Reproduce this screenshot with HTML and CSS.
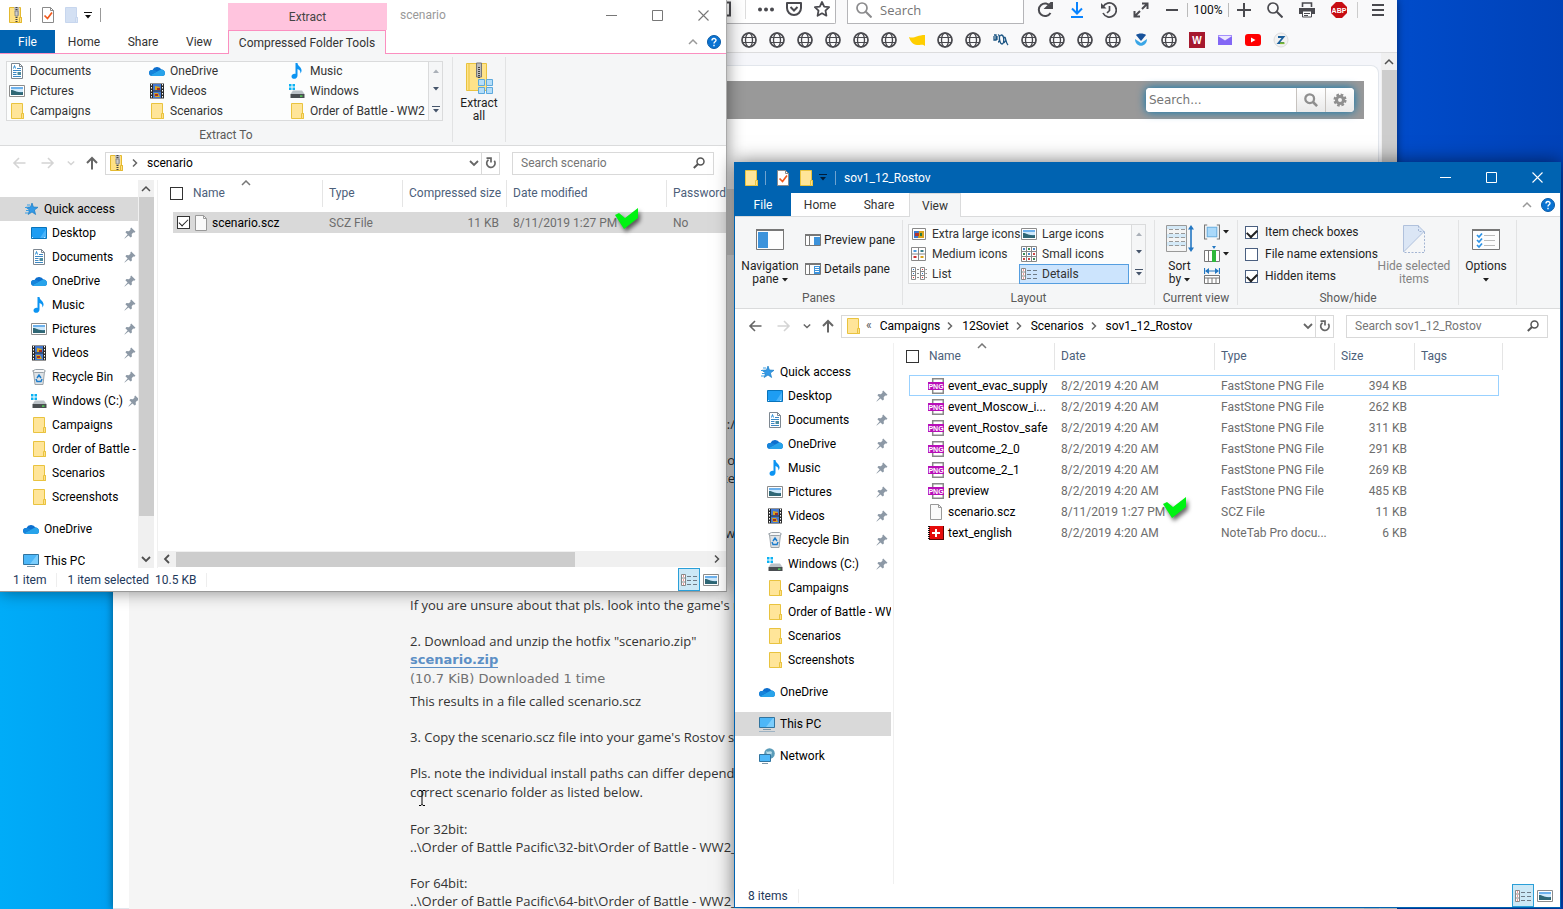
FILE: index.html
```html
<!DOCTYPE html>
<html lang="en">
<head>
    <meta charset="UTF-8">
    <meta name="viewport" content="width=device-width, initial-scale=1.0">
    <title>Desktop</title>
    <link rel="stylesheet" href="styles.css">
</head>
<body>
    <!-- Icon sprite -->
    <svg class="sprite" aria-hidden="true">
        <symbol id="folder" viewBox="0 0 16 16"><path d="M2.500 .5h11v10h1v5h-12z" fill="#ffe599" stroke="#e9c33f"/><path d="M12.500 15.500v-5h2v5z" fill="#ffe08a" stroke="#e9c33f"/></symbol>
        <symbol id="folder-pale" viewBox="0 0 16 16"><path d="M2.500 .5h11v10h1v5h-12z" fill="#d3e0f3" stroke="#c7d6ee"/><path d="M12.500 15.500v-5h2v5z" fill="#dbe6f5" stroke="#c7d6ee"/></symbol>
        <symbol id="zip" viewBox="0 0 16 16"><path d="M1.500 .5h11v10h1v5h-12z" fill="#ffe184" stroke="#e3b930"/><path d="M11.500 15.500v-5h2v5z" fill="#ffe08a" stroke="#e3b930"/><path d="M6 0h5v8l-2 2-2-2z" fill="#b9b9b9"/><path d="M8.500 0v16" stroke="#444" stroke-width="2" stroke-dasharray="1 1"/><path d="M7 4h3v5H7z" fill="#ccc" stroke="#666" stroke-width=".6"/></symbol>
        <symbol id="check-doc" viewBox="0 0 16 16"><path d="M2.500 .5h8l3 3v12h-11z" fill="#fff" stroke="#8a8a8a"/><path d="M10.500 .5v3h3" fill="none" stroke="#8a8a8a"/><path d="M4.500 8.500l3 3 4.500-6" fill="none" stroke="#f0581c" stroke-width="1.700"/></symbol>
        <symbol id="doc" viewBox="0 0 16 16"><path d="M2.500 .5h8l3 3v12h-11z" fill="#fff" stroke="#7d8791"/><path d="M10.500 .5v3h3" fill="none" stroke="#7d8791"/><path d="M4 7.500h8M4 9.500h3.500M4 11.500h3.500M4 13.500h8M8 5.500h4" stroke="#3c88c4"/><path d="M4.500 5.500l1-3 1 3" stroke="#2a8dd4" fill="none"/><path d="M8.500 9h3.500v3H8.500z" fill="#4b8c9f"/></symbol>
        <symbol id="picture" viewBox="0 0 16 16"><path d="M.5 2.500h15v11H.5z" fill="#fff" stroke="#8c8c8c"/><path d="M2 4h12v8H2z" fill="#6db1ec"/><path d="M2 6h12v3H2z" fill="#cfe9fb"/><path d="M2 7c4 0 5 3 12 2v3H2z" fill="#2f6775"/></symbol>
        <symbol id="cloud" viewBox="0 0 16 16"><path d="M3.500 7A5 5 0 0 1 12.500 6.500 4 4 0 0 1 16 10a3 3 0 0 1-3 3H3.500A3.200 3.200 0 0 1 0 10 3.200 3.200 0 0 1 3.500 7z" fill="#0d6fce"/><path d="M1.500 12L12 6.500A4 4 0 0 1 16 10a3 3 0 0 1-3 3H3.500a3 3 0 0 1-2-1z" fill="#28a3ea"/><path d="M0 10a3.200 3.200 0 0 1 3.500-3c2 0 3 .5 4.500 1.500L1.500 12A3 3 0 0 1 0 10z" fill="#1684db"/></symbol>
        <symbol id="music" viewBox="0 0 16 16"><path d="M6.500 0h2c0 3.500 4.500 3.800 4 8-.1 1.300-.8 2-1.300 2.500C12 7.500 10 6.500 8.500 6v6.500C8.500 16.500 2.500 17 2.500 13.500c0-2.200 2.500-3 4-2.500z" fill="#0c94f2"/></symbol>
        <symbol id="video" viewBox="0 0 16 16"><path d="M1 .5h14v15H1z" fill="#2b2b2b"/><path d="M2.500 1v14M13.500 1v14" stroke="#fff" stroke-dasharray="1.500 1.500"/><path d="M4 1h8v6.500H4zM4 8.500h8V15H4z" fill="#4479cf"/><path d="M6 3l5 1-2 3H6zM5 10h4l2 4H6z" fill="#d9a520"/><path d="M8 5h3v2H8zM6 11h3v2H6z" fill="#a52e23"/></symbol>
        <symbol id="drive" viewBox="0 0 16 16"><path d="M0 1h2.500v2.500H0zM3.500 1H6v2.500H3.500zM0 4.500h2.500V7H0zM3.500 4.500H6V7H3.500z" fill="#0bb2f3"/><path d="M4 7.500h9l2.500 3.500H1.500z" fill="#bcc2c7"/><path d="M1.500 11h14v4h-14z" fill="#4a4e51"/><path d="M11 12.500h2.500v1.200H11z" fill="#57ef58"/></symbol>
        <symbol id="desktop-icon" viewBox="0 0 16 16"><path d="M.5 2.500h15v11H.5z" fill="#1e9df3" stroke="#0873bb"/><path d="M9 13L15 4v9z" fill="#49b3fa"/><path d="M1 12.500h14" stroke="#cfe9fb" stroke-dasharray="1 11 1 1"/></symbol>
        <symbol id="recycle" viewBox="0 0 16 16"><path d="M2.500 2.500h11l-1.500 13H4z" fill="#dfe3e6" stroke="#9ba3a9"/><path d="M1.500 2l3-1.500h8l2 1.500-2 1.500h-9z" fill="#f6f7f8" stroke="#9ba3a9"/><path d="M6 9l2-3 2 3M11 10l-1 2.500H6L5 10" fill="none" stroke="#1d7dcc" stroke-width="1.500"/></symbol>
        <symbol id="star" viewBox="0 0 16 16"><path d="M9 2l1.400 4 4.600.3-3.600 2.700 1.200 4.500L9 11l-3.800 2.500L6.500 9 3 6.300 7.500 6z" fill="#3399e6" stroke="#1b7cc4" stroke-width=".7"/><path d="M4 4h3M2 6.500h3M3 9.500h3M2 12h3" stroke="#3a9fe5"/></symbol>
        <symbol id="pc" viewBox="0 0 16 16"><path d="M.5 1.500h15v10H.5z" fill="#4db7f8" stroke="#31749f"/><path d="M7 11L14 2h1v9z" fill="#7bcdfc"/><path d="M4 13.500h8" stroke="#7d97a8"/><path d="M0 15.500h16" stroke="#9fb4c4"/></symbol>
        <symbol id="network" viewBox="0 0 16 16"><circle cx="10.500" cy="5.500" r="5.300" fill="#5b9cb9"/><path d="M7 3c2 2 4-1 6 1l-1 4-4-1z" fill="#b6dbe8"/><path d="M.5 6.500h11v7H.5z" fill="#4db7f8" stroke="#31749f"/><path d="M3 15.500h6" stroke="#7d97a8"/></symbol>
        <symbol id="pin" viewBox="0 0 12 12"><path d="M7.200 .5l4.300 4.300-1.300.9-1-.2L7.700 7.200l.2 2.300L6.700 10.600 4.400 8.400 .8 11.600 .4 11.200 3.600 7.600 1.400 5.300l1.100-1.200 2.300.2 1.700-1.500-.2-1z" fill="#8d99a6"/></symbol>
        <symbol id="file" viewBox="0 0 16 16"><path d="M2.500 .5h8l3 3v12h-11z" fill="#fafafa" stroke="#999"/><path d="M10.500 .5v3h3" fill="none" stroke="#999"/></symbol>
        <symbol id="png" viewBox="0 0 16 16"><path d="M4.700 .7h10.600v14.600H4.700z" fill="#fff" stroke="#888" stroke-width="1.500"/><path d="M0 4h16v8H0z" fill="#b80fb8"/><text x="8" y="10.500" text-anchor="middle" font-family="Liberation Sans, sans-serif" font-size="7" font-weight="bold" fill="#fff">PNG</text></symbol>
        <symbol id="notetab" viewBox="0 0 16 16"><path d="M1 1h15v14H1z" fill="#e60b0b"/><path d="M1 1v14" stroke="#111" stroke-width="2" stroke-dasharray="1 1"/><path d="M15.500 1v14M1 14.500h15" stroke="#5b0505"/><path d="M8 4v8M4 8h8" stroke="#fff" stroke-width="2"/></symbol>
        <symbol id="back" viewBox="0 0 14 14"><path d="M13.500 7H2M7 2L2 7l5 5" fill="none" stroke="currentColor" stroke-width="1.600"/></symbol>
        <symbol id="fwd" viewBox="0 0 14 14"><path d="M.5 7H12M7 2l5 5-5 5" fill="none" stroke="currentColor" stroke-width="1.600"/></symbol>
        <symbol id="up" viewBox="0 0 14 14"><path d="M7 13.500V2M2 7l5-5 5 5" fill="none" stroke="currentColor" stroke-width="2"/></symbol>
        <symbol id="chev-down" viewBox="0 0 10 10"><path d="M1 3l4 4 4-4" fill="none" stroke="currentColor" stroke-width="1.800"/></symbol>
        <symbol id="chev-up" viewBox="0 0 10 10"><path d="M1 7l4-4 4 4" fill="none" stroke="currentColor" stroke-width="1.500"/></symbol>
        <symbol id="chev-right" viewBox="0 0 10 10"><path d="M3 1.500L6.500 5 3 8.500" fill="none" stroke="currentColor" stroke-width="1.500"/></symbol>
        <symbol id="chev-left" viewBox="0 0 10 10"><path d="M7 1L3 5l4 4" fill="none" stroke="currentColor" stroke-width="1.800"/></symbol>
        <symbol id="caret" viewBox="0 0 6 4"><path d="M0 0h6L3 3.500z" fill="currentColor"/></symbol>
        <symbol id="caret-up" viewBox="0 0 6 4"><path d="M0 4h6L3 .5z" fill="currentColor"/></symbol>
        <symbol id="caret-bar" viewBox="0 0 8 7"><path d="M0 .5h8" stroke="currentColor"/><path d="M1 3h6L4 6.500z" fill="currentColor"/></symbol>
        <symbol id="refresh" viewBox="0 0 14 14"><path d="M4.500 3.700A4.200 4.200 0 1 0 10.300 4.700" fill="none" stroke="currentColor" stroke-width="1.700"/><path d="M2.500 2.200h4.500V6.500" fill="none" stroke="currentColor" stroke-width="1.700"/></symbol>
        <symbol id="lens" viewBox="0 0 12 12"><circle cx="7.500" cy="4.500" r="3.500" fill="none" stroke="currentColor" stroke-width="1.500"/><path d="M5 7L.8 11" stroke="currentColor" stroke-width="2"/></symbol>
        <symbol id="min" viewBox="0 0 11 11"><path d="M0 5.500h11" stroke="currentColor"/></symbol>
        <symbol id="max" viewBox="0 0 11 11"><path d="M.5 .5h10v10H.5z" fill="none" stroke="currentColor"/></symbol>
        <symbol id="close" viewBox="0 0 11 11"><path d="M.5 .5l10 10M10.500 .5l-10 10" stroke="currentColor" stroke-width="1.100"/></symbol>
        <symbol id="help" viewBox="0 0 14 14"><circle cx="7" cy="7" r="6.500" fill="#0a73d2" stroke="#0a5ba6"/><path d="M5 5.500c0-2.600 4-2.600 4-.2C9 6.800 7 6.800 7 8.500M7 9.800v1.400" fill="none" stroke="#fff" stroke-width="1.400"/></symbol>
        <symbol id="view-list" viewBox="0 0 16 14"><path d="M.5 1.500h4v11h-4zM.5 5h4M.5 9h4" fill="#fff" stroke="#888"/><path d="M2 3h1M2 7h1M2 11h1" stroke="#d33"/><path d="M6 3.500h4M12 3.500h4M6 7.500h4M12 7.500h4M6 11.500h4M12 11.500h4" stroke="#6e7b87"/></symbol>
        <symbol id="list2" viewBox="0 0 16 14"><path d="M.5 .5h4v12h-4zM.5 4.500h4M.5 8.500h4M9.500 .5h4v12h-4zM9.500 4.500h4M9.500 8.500h4" fill="#fff" stroke="#888"/><path d="M2 2.500h1M2 6.500h1M11 6.500h1" stroke="#2c70b8"/><path d="M2 10.500h1M11 2.500h1M11 10.500h1" stroke="#d33"/><path d="M6 2.500h2M6 6.500h2M6 10.500h2M14.500 2.500H16M14.500 6.500H16M14.500 10.500H16" stroke="#888"/></symbol>
        <symbol id="img-xl" viewBox="0 0 16 14"><path d="M1.500 1.500h13v11h-13z" fill="#fff" stroke="#888"/><path d="M3 4h10v7H3z" fill="#3b77cf"/><path d="M8 4h5v7H7z" fill="#d9a31c"/><path d="M4 6h4v3H4z" fill="#b6352d"/><path d="M9 6h2v3H9z" fill="#2d7a42"/></symbol>
        <symbol id="grid4" viewBox="0 0 16 14"><path d="M.5 .5h14v13H.5zM7.500 .5v13M.5 7h14" fill="#fff" stroke="#888"/><path d="M2.500 3h3v2h-3z" fill="#4c9be0"/><path d="M9.500 3h3v2h-3z" fill="#3a7d86"/><path d="M2.500 9h3v2h-3z" fill="#c33"/><path d="M9.500 9h3v2h-3z" fill="#d9a31c"/></symbol>
        <symbol id="grid9" viewBox="0 0 16 16"><path d="M.5 .5h15v15H.5zM5.500 .5v15M10.500 .5v15M.5 5.500h15M.5 10.500h15" fill="#fff" stroke="#888"/><path d="M2 3h2M7 8h2M12 3h2" stroke="#4c88c8" stroke-width="2"/><path d="M7 3h2M2 8h2M12 13h2" stroke="#3b8b55" stroke-width="2"/><path d="M2 13h2M7 13h2M12 8h2" stroke="#c44" stroke-width="2"/></symbol>
        <symbol id="nav-pane" viewBox="0 0 28 21"><path d="M.5 .5h27v20H.5z" fill="#fdfdfd" stroke="#777"/><path d="M0 0h28v2H0z" fill="#777"/><path d="M2 3h10v16H2z" fill="#3d93db"/></symbol>
        <symbol id="preview-pane" viewBox="0 0 16 12"><path d="M.5 .5h15v11H.5z" fill="#fdfdfd" stroke="#777"/><path d="M0 0h16v2H0zM4 2h1v10H4z" fill="#777"/><path d="M9 3h6v8H9z" fill="#3d93db"/></symbol>
        <symbol id="details-pane" viewBox="0 0 16 12"><path d="M.5 .5h15v11H.5z" fill="#fdfdfd" stroke="#777"/><path d="M0 0h16v2H0zM4 2h1v10H4z" fill="#777"/><path d="M9 3h6v8H9z" fill="#3d93db"/><path d="M10 4.500h4M10 6.500h4M10 8.500h4" stroke="#fff"/></symbol>
        <symbol id="sort" viewBox="0 0 28 28"><path d="M.5 .5h20v26H.5z" fill="#f4f4f4" stroke="#999"/><path d="M1 1h19v3H1zM1 9h19v4H1zM1 17h19v4H1z" fill="#d4e9f7"/><path d="M3 4.500h16M3 8.500h16M3 12.500h16M3 16.500h16M3 20.500h16" stroke="#999" stroke-dasharray="4 2"/><path d="M25 2v23" stroke="#2377c2" stroke-width="1.600"/><path d="M22 4.500L25 0l3 4.500zM22 22.500l3 4.500 3-4.500z" fill="#2377c2"/></symbol>
        <symbol id="group" viewBox="0 0 15 14"><path d="M3 .5H.5v13H3M12 .5h2.500v13H12" fill="none" stroke="#777"/><path d="M3 2.500h9v9H3z" fill="#aad9fa" stroke="#6aaede"/></symbol>
        <symbol id="addcol" viewBox="0 0 16 16"><path d="M.5 4.500h15v11H.5zM4.500 4v12" fill="#fff" stroke="#777"/><path d="M8 4h4v12H8z" fill="#2eb83b"/><path d="M8 0h4l-2 3z" fill="#2377c2"/></symbol>
        <symbol id="fitcol" viewBox="0 0 16 16"><path d="M.5 0v6M15.500 0v6M2 3h12" stroke="#2377c2" stroke-width="1.200"/><path d="M1 3l4-3v6zM15 3l-4-3v6z" fill="#2377c2"/><path d="M.5 7.500h15v8H.5zM0 10h16M4 10v6M8 10v6M12 10v6" fill="#fff" stroke="#777"/></symbol>
        <symbol id="hide" viewBox="0 0 22 28"><path d="M.5 27V.5h14.500l6 6L.5 27z" fill="#dbe6f5" stroke="#b0c1dc"/><path d="M15.500 .5v6h6M21.500 7v20.500H1" fill="none" stroke="#a3b5d3" stroke-dasharray="2 1.500"/></symbol>
        <symbol id="options" viewBox="0 0 28 21"><path d="M.5 .5h27v20H.5z" fill="#fdfdfd" stroke="#777"/><path d="M0 0h28v2H0z" fill="#777"/><path d="M12 6.500h11M12 11.500h11M12 16.500h11" stroke="#bbb"/><path d="M5 6l2 2 3-3.500M5 11l2 2 3-3.500M5 16l2 2 3-3.500" fill="none" stroke="#2e93e6" stroke-width="1.700"/></symbol>
        <symbol id="extract" viewBox="0 0 28 32"><path d="M.5 1.500h20v27H.5z" fill="#ffe38a" stroke="#e9c33f"/><path d="M3 2v26" stroke="#e9c33f"/><path d="M10.500 1h5v14h-5z" fill="#bbb" stroke="#777"/><path d="M13 5v11" stroke="#444" stroke-width="2" stroke-dasharray="1 1"/><path d="M12.500 17.500h6v6h-6zM20.500 17.500h6v6h-6zM12.500 25.500h6v6h-6zM20.500 25.500h6v6h-6z" fill="#b5def9" stroke="#5da9dc"/></symbol>
        <symbol id="globe" viewBox="0 0 16 16"><circle cx="8" cy="8" r="7" fill="none" stroke="#4a4a4f" stroke-width="1.700"/><path d="M1 5.500h14M1 10.500h14" stroke="#4a4a4f" stroke-width="1.200"/><ellipse cx="8" cy="8" rx="3.500" ry="7" fill="none" stroke="#4a4a4f" stroke-width="1.300"/></symbol>
        <symbol id="magnify" viewBox="0 0 16 16"><circle cx="6" cy="6" r="5" fill="none" stroke="currentColor" stroke-width="1.700"/><path d="M9.800 9.800L15.500 15.500" stroke="currentColor" stroke-width="2"/></symbol>
        <symbol id="tick" viewBox="0 0 26 28"><path d="M0 8l4-2 6 5L23 1v10L9 22z" fill="#00f312"/></symbol>
    </svg>

    <main class="desktop">
        <!-- Browser in the background -->
        <section class="browser">
            <div class="toolbar">
                <div class="url-end">
                    <svg class="i16 reader" viewBox="0 0 16 16"><path d="M0 1.500h14v13H0M4 5h6M4 8h6M4 11h4" fill="none" stroke="#4a4a4f" stroke-width="2"/></svg>
                    <span class="bar"></span>
                    <svg class="i16" viewBox="0 0 16 16"><path d="M2 6.500a2 2 0 1 1 0 4 2 2 0 0 1 0-4zM8 6.500a2 2 0 1 1 0 4 2 2 0 0 1 0-4zM14 6.500a2 2 0 1 1 0 4 2 2 0 0 1 0-4z" fill="#4a4a4f"/></svg>
                    <svg class="i16" viewBox="0 0 16 16"><path d="M1 2h14v5a7 7 0 0 1-14 0z" fill="none" stroke="#4a4a4f" stroke-width="2" stroke-linejoin="round"/><path d="M4.500 6L8 9.500 11.500 6" fill="none" stroke="#4a4a4f" stroke-width="2"/></svg>
                    <svg class="i16" viewBox="0 0 16 16"><path d="M8 1l2.200 4.600 4.900.6-3.600 3.500.9 5L8 12.300l-4.400 2.400.9-5L.9 6.200l4.900-.6z" fill="none" stroke="#4a4a4f" stroke-width="1.800" stroke-linejoin="round"/></svg>
                </div>
                <label class="web-search">
                    <svg class="i16"><use href="#magnify"/></svg>
                    <input type="text" placeholder="Search">
                </label>
                <button class="tool"><svg class="i16" viewBox="0 0 16 16"><path d="M13.500 4.500A6.300 6.300 0 1 0 13.500 11M15 0v6H9z" fill="none" stroke="#4a4a4f" stroke-width="2"/><path d="M15 1v5h-5z" fill="#4a4a4f"/></svg></button>
                <button class="tool"><svg class="i16" viewBox="0 0 16 16"><path d="M8 0v11M3 6.500l5 5 5-5M2 15h12" fill="none" stroke="#0a84ff" stroke-width="2"/></svg></button>
                <button class="tool"><svg class="i16" viewBox="0 0 16 16"><path d="M2 5a7 7 0 1 1 0 6M8.500 4v4.500L6 11" fill="none" stroke="#4a4a4f" stroke-width="1.700"/><path d="M0 1v5.500h5.500z" fill="#4a4a4f"/></svg></button>
                <button class="tool"><svg class="i16" viewBox="0 0 16 16"><path d="M9 1.500h5.500V7M14 2L9 7M7 14.500H1.500V9M2 14l5-5" fill="none" stroke="#4a4a4f" stroke-width="2"/></svg></button>
                <button class="tool zoom-btn"><svg class="i16" viewBox="0 0 16 16"><path d="M2 8h12" stroke="#4a4a4f" stroke-width="2"/></svg></button>
                <span class="zoom-level">100%</span>
                <button class="tool zoom-btn"><svg class="i16" viewBox="0 0 16 16"><path d="M1 8h14M8 1v14" stroke="#4a4a4f" stroke-width="2"/></svg></button>
                <button class="tool"><svg class="i16 dark"><use href="#magnify"/></svg></button>
                <button class="tool"><svg class="i16" viewBox="0 0 16 16"><path d="M3.500 5V1h9v4" fill="none" stroke="#4a4a4f" stroke-width="1.600"/><path d="M0 6h16v6H0z" fill="#4a4a4f"/><path d="M3.500 9h9v6h-9z" fill="#fff" stroke="#4a4a4f"/><path d="M5 11.500h6M5 13.500h4" stroke="#4a4a4f"/></svg></button>
                <button class="tool"><svg class="i16" viewBox="0 0 16 16"><path d="M5 0h6l5 5v6l-5 5H5l-5-5V5z" fill="#c70d13"/><text x="8" y="10.500" text-anchor="middle" font-family="Liberation Sans, sans-serif" font-size="7" font-weight="bold" fill="#fff">ABP</text></svg></button>
                <button class="tool menu-btn"><svg class="i16" viewBox="0 0 16 16"><path d="M2 3h12M2 8h12M2 13h12" stroke="#4a4a4f" stroke-width="2"/></svg></button>
            </div>
            <div class="bookmarks">
                <svg><use href="#globe"/></svg>
                <svg><use href="#globe"/></svg>
                <svg><use href="#globe"/></svg>
                <svg><use href="#globe"/></svg>
                <svg><use href="#globe"/></svg>
                <svg><use href="#globe"/></svg>
                <svg viewBox="0 0 16 16"><path d="M0 5c5 2 8-2 16-2v11c-2-2-4-1-8-1S1 9 0 5z" fill="#ffce00"/></svg>
                <svg><use href="#globe"/></svg>
                <svg><use href="#globe"/></svg>
                <svg viewBox="0 0 16 16"><path d="M1 4v4h2V3H1M4 8V4M5 3c2-1 2 7 0 7M8 3c-3 1-1 9 1 9s3-9-1-9M11 6c2-3 1 4 4 7M11 11l2-3" fill="none" stroke="#1c5583" stroke-width="1.300"/></svg>
                <svg><use href="#globe"/></svg>
                <svg><use href="#globe"/></svg>
                <svg><use href="#globe"/></svg>
                <svg><use href="#globe"/></svg>
                <svg viewBox="0 0 16 16"><path d="M3 3c2-2 8-2 10 0L8 9z" fill="#17529b"/><path d="M2 7l6 4 6-4c0 9-12 9-12 0z" fill="#3aa6e6"/></svg>
                <svg><use href="#globe"/></svg>
                <svg viewBox="0 0 16 16"><path d="M0 0h16v16H0z" fill="#a6192e"/><text x="8" y="12" text-anchor="middle" font-family="Liberation Sans, sans-serif" font-size="10" font-weight="bold" fill="#fff">W</text></svg>
                <svg viewBox="0 0 16 16"><path d="M1 3h14v10H1z" fill="#8367f5"/><path d="M1 3h14v1L8 8.500 1 4z" fill="#fff" opacity=".85"/><path d="M1 3h14v1H1z" fill="#a58ffc"/></svg>
                <svg viewBox="0 0 16 16"><rect x="0" y="2" width="16" height="12" rx="3" fill="#f00"/><path d="M6 5.500v5L10.500 8z" fill="#fff"/></svg>
                <svg viewBox="0 0 16 16"><circle cx="8" cy="8" r="7" fill="#f1f1f1" stroke="#ddd"/><path d="M5 5h5.500l-5 6H11" fill="none" stroke="#1b5f9b" stroke-width="1.800"/><path d="M7 11.200h4.500" stroke="#7bb92e" stroke-width="1.800"/></svg>
            </div>
            <div class="viewport">
                <div class="page">
                    <div class="page-wrap">
                        <header class="site-header">
                            <form class="site-search">
                                <input type="text" placeholder="Search..." aria-label="Search the forum">
                                <button type="button"><svg viewBox="0 0 16 16"><circle cx="6.500" cy="6.500" r="5" fill="none" stroke="#8f8f8f" stroke-width="2.600"/><path d="M10 10l5 5" stroke="#8f8f8f" stroke-width="3"/></svg></button>
                                <button type="button"><svg viewBox="0 0 16 16"><circle cx="8" cy="8" r="6" fill="none" stroke="#8f8f8f" stroke-width="3" stroke-dasharray="2.900 1.812"/><circle cx="8" cy="8" r="4" fill="none" stroke="#8f8f8f" stroke-width="3.500"/></svg></button>
                            </form>
                        </header>
                        <div class="site-nav"></div>
                        <article class="post">
                            <p class="tail first">C:/</p>
                            <p class="tail">to<br>te</p>
                            <p class="tail gap">ow</p>
                            <p class="wide-gap">If you are unsure about that pls. look into the game's manual</p>
                            <p>2. Download and unzip the hotfix "scenario.zip"</p>
                            <div class="attachment">
                                <a href="#">scenario.zip</a><br>
                                (10.7 KiB) Downloaded 1 time
                            </div>
                            <p class="after-file">This results in a file called scenario.scz</p>
                            <p>3. Copy the scenario.scz file into your game's Rostov scenario folder</p>
                            <p class="note">Pls. note the individual install paths can differ depending on<br>correct scenario folder as listed below.</p>
                            <p>For 32bit:<br>..\Order of Battle Pacific\32-bit\Order of Battle - WW2_</p>
                            <p>For 64bit:<br>..\Order of Battle Pacific\64-bit\Order of Battle - WW2_</p>
                        </article>
                    </div>
                </div>
                <div class="vscroll">
                    <svg class="i10"><use href="#chev-up"/></svg>
                    <span class="thumb"></span>
                </div>
            </div>
        </section>

        <!-- Explorer: zip folder -->
        <section class="explorer zip-window">
            <div class="titlebar">
                <div class="quick">
                    <svg class="i16"><use href="#zip"/></svg>
                    <span class="bar"></span>
                    <svg class="i16"><use href="#check-doc"/></svg>
                    <svg class="i16"><use href="#folder-pale"/></svg>
                    <svg class="caret-bar"><use href="#caret-bar"/></svg>
                    <span class="bar"></span>
                </div>
                <div class="context">Extract</div>
                <span class="title">scenario</span>
                <div class="controls">
                    <button aria-label="Minimize"><svg><use href="#min"/></svg></button>
                    <button aria-label="Maximize"><svg><use href="#max"/></svg></button>
                    <button aria-label="Close"><svg><use href="#close"/></svg></button>
                </div>
            </div>
            <nav class="tabs">
                <button class="tab file-tab">File</button>
                <button class="tab home-tab">Home</button>
                <button class="tab share-tab">Share</button>
                <button class="tab view-tab">View</button>
                <button class="tab context-tab">Compressed Folder Tools</button>
                <svg class="i10 collapse"><use href="#chev-up"/></svg>
                <svg class="help"><use href="#help"/></svg>
            </nav>
            <div class="ribbon">
                <div class="group">
                    <div class="group-body">
                        <div class="gallery extract-gallery">
                            <div class="gallery-items">
                                <button><svg class="i16"><use href="#doc"/></svg>Documents</button>
                                <button><svg class="i16"><use href="#cloud"/></svg>OneDrive</button>
                                <button><svg class="i16"><use href="#music"/></svg>Music</button>
                                <button><svg class="i16"><use href="#picture"/></svg>Pictures</button>
                                <button><svg class="i16"><use href="#video"/></svg>Videos</button>
                                <button><svg class="i16"><use href="#drive"/></svg>Windows</button>
                                <button><svg class="i16"><use href="#folder"/></svg>Campaigns</button>
                                <button><svg class="i16"><use href="#folder"/></svg>Scenarios</button>
                                <button><svg class="i16"><use href="#folder"/></svg>Order of Battle - WW2</button>
                            </div>
                            <div class="gallery-scroll">
                                <svg class="caret faded"><use href="#caret-up"/></svg>
                                <svg class="caret"><use href="#caret"/></svg>
                                <svg class="caret-bar"><use href="#caret-bar"/></svg>
                            </div>
                        </div>
                    </div>
                    <div class="group-label">Extract To</div>
                </div>
                <div class="group extract-group">
                    <button class="big extract-all"><svg class="extract-icon"><use href="#extract"/></svg><span>Extract<br>all</span></button>
                </div>
            </div>
            <div class="address-row">
                <div class="arrows">
                    <svg class="i14 off"><use href="#back"/></svg>
                    <svg class="i14 off"><use href="#fwd"/></svg>
                    <svg class="small-chev off"><use href="#chev-down"/></svg>
                    <svg class="i14"><use href="#up"/></svg>
                </div>
                <div class="address">
                    <svg class="i16"><use href="#zip"/></svg>
                    <svg class="i10 sep"><use href="#chev-right"/></svg>
                    <span>scenario</span>
                    <svg class="i10 drop"><use href="#chev-down"/></svg>
                    <button class="refresh" aria-label="Refresh"><svg class="i14"><use href="#refresh"/></svg></button>
                </div>
                <label class="search"><input type="text" placeholder="Search scenario"><svg><use href="#lens"/></svg></label>
            </div>
            <div class="content">
                <ul class="nav">
                    <li class="root selected"><svg class="i16"><use href="#star"/></svg><span>Quick access</span></li>
                    <li><svg class="i16"><use href="#desktop-icon"/></svg><span>Desktop</span><svg class="pin"><use href="#pin"/></svg></li>
                    <li><svg class="i16"><use href="#doc"/></svg><span>Documents</span><svg class="pin"><use href="#pin"/></svg></li>
                    <li><svg class="i16"><use href="#cloud"/></svg><span>OneDrive</span><svg class="pin"><use href="#pin"/></svg></li>
                    <li><svg class="i16"><use href="#music"/></svg><span>Music</span><svg class="pin"><use href="#pin"/></svg></li>
                    <li><svg class="i16"><use href="#picture"/></svg><span>Pictures</span><svg class="pin"><use href="#pin"/></svg></li>
                    <li><svg class="i16"><use href="#video"/></svg><span>Videos</span><svg class="pin"><use href="#pin"/></svg></li>
                    <li><svg class="i16"><use href="#recycle"/></svg><span>Recycle Bin</span><svg class="pin"><use href="#pin"/></svg></li>
                    <li><svg class="i16"><use href="#drive"/></svg><span>Windows (C:)</span><svg class="pin"><use href="#pin"/></svg></li>
                    <li><svg class="i16"><use href="#folder"/></svg><span>Campaigns</span></li>
                    <li><svg class="i16"><use href="#folder"/></svg><span>Order of Battle -</span></li>
                    <li><svg class="i16"><use href="#folder"/></svg><span>Scenarios</span></li>
                    <li><svg class="i16"><use href="#folder"/></svg><span>Screenshots</span></li>
                    <li class="root spaced"><svg class="i16"><use href="#cloud"/></svg><span>OneDrive</span></li>
                    <li class="root spaced"><svg class="i16"><use href="#pc"/></svg><span>This PC</span></li>
                </ul>
                <div class="vscroll nav-scroll">
                    <svg class="i10"><use href="#chev-up"/></svg>
                    <span class="thumb"></span>
                    <svg class="i10"><use href="#chev-down"/></svg>
                </div>
                <div class="files">
                    <table class="zip-table">
                        <thead>
                            <tr>
                                <th class="c-name"><div class="name-head"><input type="checkbox" aria-label="Select all">Name<svg class="i10 sorted"><use href="#chev-up"/></svg></div></th>
                                <th class="c-type"><div>Type</div></th>
                                <th class="c-size"><div>Compressed size</div></th>
                                <th class="c-date"><div>Date modified</div></th>
                                <th class="c-pass"><div>Password</div></th>
                            </tr>
                        </thead>
                        <tbody>
                            <tr class="selected">
                                <td><div class="file-name"><input type="checkbox" checked aria-label="scenario.scz"><svg class="i16"><use href="#file"/></svg><span>scenario.scz</span></div></td>
                                <td>SCZ File</td>
                                <td class="num">11 KB</td>
                                <td class="marked">8/11/2019 1:27 PM<svg class="tick"><use href="#tick"/></svg></td>
                                <td>No</td>
                            </tr>
                        </tbody>
                    </table>
                    <div class="hscroll">
                        <svg class="i10"><use href="#chev-left"/></svg>
                        <span class="thumb"></span>
                        <svg class="i10"><use href="#chev-right"/></svg>
                    </div>
                </div>
            </div>
            <footer class="status">
                <span>1 item</span>
                <span>1 item selected&nbsp; 10.5 KB</span>
                <div class="view-switch">
                    <button class="on" aria-label="Details"><svg class="i16"><use href="#view-list"/></svg></button>
                    <button aria-label="Thumbnails"><svg class="i16"><use href="#picture"/></svg></button>
                </div>
            </footer>
        </section>

        <!-- Explorer: Rostov folder -->
        <section class="explorer folder-window">
            <div class="titlebar">
                <div class="quick">
                    <svg class="i16"><use href="#folder"/></svg>
                    <span class="bar"></span>
                    <svg class="i16"><use href="#check-doc"/></svg>
                    <svg class="i16"><use href="#folder"/></svg>
                    <svg class="caret-bar"><use href="#caret-bar"/></svg>
                    <span class="bar"></span>
                </div>
                <span class="title">sov1_12_Rostov</span>
                <div class="controls">
                    <button aria-label="Minimize"><svg><use href="#min"/></svg></button>
                    <button aria-label="Maximize"><svg><use href="#max"/></svg></button>
                    <button aria-label="Close"><svg><use href="#close"/></svg></button>
                </div>
            </div>
            <nav class="tabs">
                <button class="tab file-tab">File</button>
                <button class="tab home-tab">Home</button>
                <button class="tab share-tab">Share</button>
                <button class="tab view-tab active">View</button>
                <svg class="i10 collapse"><use href="#chev-up"/></svg>
                <svg class="help"><use href="#help"/></svg>
            </nav>
            <div class="ribbon">
                <div class="group panes">
                    <div class="group-body">
                        <button class="big nav-button"><svg class="wide-icon"><use href="#nav-pane"/></svg><span>Navigation</span><span class="with-caret">pane<svg class="caret"><use href="#caret"/></svg></span></button>
                        <div class="pane-buttons">
                            <button><svg class="pane-icon"><use href="#preview-pane"/></svg>Preview pane</button>
                            <button><svg class="pane-icon"><use href="#details-pane"/></svg>Details pane</button>
                        </div>
                    </div>
                    <div class="group-label">Panes</div>
                </div>
                <div class="group layout">
                    <div class="group-body">
                        <div class="gallery layout-gallery">
                            <div class="gallery-items">
                                <button><svg class="i16"><use href="#img-xl"/></svg>Extra large icons</button>
                                <button><svg class="i16"><use href="#picture"/></svg>Large icons</button>
                                <button><svg class="i16"><use href="#grid4"/></svg>Medium icons</button>
                                <button><svg class="i16"><use href="#grid9"/></svg>Small icons</button>
                                <button><svg class="i16"><use href="#list2"/></svg>List</button>
                                <button class="chosen"><svg class="i16"><use href="#view-list"/></svg>Details</button>
                            </div>
                            <div class="gallery-scroll">
                                <svg class="caret faded"><use href="#caret-up"/></svg>
                                <svg class="caret"><use href="#caret"/></svg>
                                <svg class="caret-bar"><use href="#caret-bar"/></svg>
                            </div>
                        </div>
                    </div>
                    <div class="group-label">Layout</div>
                </div>
                <div class="group current">
                    <div class="group-body">
                        <button class="big sort-button"><svg class="sort-icon"><use href="#sort"/></svg><span>Sort</span><span class="with-caret">by<svg class="caret"><use href="#caret"/></svg></span></button>
                        <div class="column-buttons">
                            <button aria-label="Group by"><svg class="i16"><use href="#group"/></svg><svg class="caret"><use href="#caret"/></svg></button>
                            <button aria-label="Add columns"><svg class="i16"><use href="#addcol"/></svg><svg class="caret"><use href="#caret"/></svg></button>
                            <button aria-label="Size all columns to fit"><svg class="i16"><use href="#fitcol"/></svg></button>
                        </div>
                    </div>
                    <div class="group-label">Current view</div>
                </div>
                <div class="group showhide">
                    <div class="group-body">
                        <div class="checks">
                            <label><input type="checkbox" checked>Item check boxes</label>
                            <label><input type="checkbox">File name extensions</label>
                            <label><input type="checkbox" checked>Hidden items</label>
                        </div>
                        <button class="big hide-button" disabled><svg class="hide-icon"><use href="#hide"/></svg><span>Hide selected<br>items</span></button>
                    </div>
                    <div class="group-label">Show/hide</div>
                </div>
                <div class="group options">
                    <div class="group-body">
                        <button class="big options-button"><svg class="wide-icon"><use href="#options"/></svg><span>Options</span><svg class="caret"><use href="#caret"/></svg></button>
                    </div>
                </div>
            </div>
            <div class="address-row">
                <div class="arrows">
                    <svg class="i14"><use href="#back"/></svg>
                    <svg class="i14 off"><use href="#fwd"/></svg>
                    <svg class="small-chev"><use href="#chev-down"/></svg>
                    <svg class="i14"><use href="#up"/></svg>
                </div>
                <div class="address">
                    <svg class="i16"><use href="#folder"/></svg>
                    <span class="laquo">«</span>
                    <span>Campaigns</span>
                    <svg class="i10 sep"><use href="#chev-right"/></svg>
                    <span>12Soviet</span>
                    <svg class="i10 sep"><use href="#chev-right"/></svg>
                    <span>Scenarios</span>
                    <svg class="i10 sep"><use href="#chev-right"/></svg>
                    <span>sov1_12_Rostov</span>
                    <svg class="i10 drop"><use href="#chev-down"/></svg>
                    <button class="refresh" aria-label="Refresh"><svg class="i14"><use href="#refresh"/></svg></button>
                </div>
                <label class="search"><input type="text" placeholder="Search sov1_12_Rostov"><svg><use href="#lens"/></svg></label>
            </div>
            <div class="content">
                <ul class="nav">
                    <li class="root"><svg class="i16"><use href="#star"/></svg><span>Quick access</span></li>
                    <li><svg class="i16"><use href="#desktop-icon"/></svg><span>Desktop</span><svg class="pin"><use href="#pin"/></svg></li>
                    <li><svg class="i16"><use href="#doc"/></svg><span>Documents</span><svg class="pin"><use href="#pin"/></svg></li>
                    <li><svg class="i16"><use href="#cloud"/></svg><span>OneDrive</span><svg class="pin"><use href="#pin"/></svg></li>
                    <li><svg class="i16"><use href="#music"/></svg><span>Music</span><svg class="pin"><use href="#pin"/></svg></li>
                    <li><svg class="i16"><use href="#picture"/></svg><span>Pictures</span><svg class="pin"><use href="#pin"/></svg></li>
                    <li><svg class="i16"><use href="#video"/></svg><span>Videos</span><svg class="pin"><use href="#pin"/></svg></li>
                    <li><svg class="i16"><use href="#recycle"/></svg><span>Recycle Bin</span><svg class="pin"><use href="#pin"/></svg></li>
                    <li><svg class="i16"><use href="#drive"/></svg><span>Windows (C:)</span><svg class="pin"><use href="#pin"/></svg></li>
                    <li><svg class="i16"><use href="#folder"/></svg><span>Campaigns</span></li>
                    <li><svg class="i16"><use href="#folder"/></svg><span>Order of Battle - WW2</span></li>
                    <li><svg class="i16"><use href="#folder"/></svg><span>Scenarios</span></li>
                    <li><svg class="i16"><use href="#folder"/></svg><span>Screenshots</span></li>
                    <li class="root spaced"><svg class="i16"><use href="#cloud"/></svg><span>OneDrive</span></li>
                    <li class="root spaced selected"><svg class="i16"><use href="#pc"/></svg><span>This PC</span></li>
                    <li class="root spaced"><svg class="i16"><use href="#network"/></svg><span>Network</span></li>
                </ul>
                <div class="files">
                    <table class="folder-table">
                        <thead>
                            <tr>
                                <th class="c-name"><div class="name-head"><input type="checkbox" aria-label="Select all">Name<svg class="i10 sorted"><use href="#chev-up"/></svg></div></th>
                                <th class="c-date"><div>Date</div></th>
                                <th class="c-type"><div>Type</div></th>
                                <th class="c-size"><div>Size</div></th>
                                <th class="c-tags"><div>Tags</div></th>
                            </tr>
                        </thead>
                        <tbody>
                            <tr class="focused">
                                <td><div class="file-name"><svg class="i16"><use href="#png"/></svg><span>event_evac_supply</span></div></td>
                                <td>8/2/2019 4:20 AM</td><td>FastStone PNG File</td><td class="num">394 KB</td><td></td>
                            </tr>
                            <tr>
                                <td><div class="file-name"><svg class="i16"><use href="#png"/></svg><span>event_Moscow_i...</span></div></td>
                                <td>8/2/2019 4:20 AM</td><td>FastStone PNG File</td><td class="num">262 KB</td><td></td>
                            </tr>
                            <tr>
                                <td><div class="file-name"><svg class="i16"><use href="#png"/></svg><span>event_Rostov_safe</span></div></td>
                                <td>8/2/2019 4:20 AM</td><td>FastStone PNG File</td><td class="num">311 KB</td><td></td>
                            </tr>
                            <tr>
                                <td><div class="file-name"><svg class="i16"><use href="#png"/></svg><span>outcome_2_0</span></div></td>
                                <td>8/2/2019 4:20 AM</td><td>FastStone PNG File</td><td class="num">291 KB</td><td></td>
                            </tr>
                            <tr>
                                <td><div class="file-name"><svg class="i16"><use href="#png"/></svg><span>outcome_2_1</span></div></td>
                                <td>8/2/2019 4:20 AM</td><td>FastStone PNG File</td><td class="num">269 KB</td><td></td>
                            </tr>
                            <tr>
                                <td><div class="file-name"><svg class="i16"><use href="#png"/></svg><span>preview</span></div></td>
                                <td>8/2/2019 4:20 AM</td><td>FastStone PNG File</td><td class="num">485 KB</td><td></td>
                            </tr>
                            <tr>
                                <td><div class="file-name"><svg class="i16"><use href="#file"/></svg><span>scenario.scz</span></div></td>
                                <td class="marked">8/11/2019 1:27 PM<svg class="tick"><use href="#tick"/></svg></td><td>SCZ File</td><td class="num">11 KB</td><td></td>
                            </tr>
                            <tr>
                                <td><div class="file-name"><svg class="i16"><use href="#notetab"/></svg><span>text_english</span></div></td>
                                <td>8/2/2019 4:20 AM</td><td>NoteTab Pro docu...</td><td class="num">6 KB</td><td></td>
                            </tr>
                        </tbody>
                    </table>
                </div>
            </div>
            <footer class="status">
                <span>8 items</span>
                <div class="view-switch">
                    <button class="on" aria-label="Details"><svg class="i16"><use href="#view-list"/></svg></button>
                    <button aria-label="Thumbnails"><svg class="i16"><use href="#picture"/></svg></button>
                </div>
            </footer>
        </section>

        <!-- Text cursor -->
        <svg class="ibeam" viewBox="0 0 8 16"><path d="M1 .5h2l1 1 1-1h2M1 15.500h2l1-1 1 1h2M4 1v14" fill="none" stroke="#000"/></svg>
    </main>
</body>
</html>
```
FILE: styles.css
```css
* {
    box-sizing: border-box;
}

body {
    margin: 0;
    font-family: Roboto, "Open Sans", sans-serif;
    font-size: 12px;
    color: #1e1e1e;
}

button, input {
    font: inherit;
    color: inherit;
}

button {
    background: none;
    border: 0;
    padding: 0;
}

svg {
    display: block;
    flex: none;
}

.sprite {
    position: absolute;
    width: 0;
    height: 0;
}

.i16 { width: 16px; height: 16px; }
.i14 { width: 14px; height: 14px; }
.i10 { width: 10px; height: 10px; }
.caret { width: 6px; height: 4px; }
.caret-bar { width: 8px; height: 7px; }

.desktop {
    position: relative;
    height: 100vh;
    overflow: hidden;
    background: linear-gradient(90deg, #00acf8 0, #00a0f2 113px, #004ccb 89%, #0042b8 100%);
}

/* Browser */
.browser {
    position: absolute;
    top: 0;
    bottom: 0;
    left: 113px;
    right: 166px;
    display: flex;
    flex-direction: column;
    background: #f9f9fa;
    box-shadow: 0 0 8px rgba(0, 0, 0, 0.5);
}

.toolbar {
    display: flex;
    justify-content: flex-end;
    align-items: center;
    height: 28px;
    padding-bottom: 8px;
}

.url-end {
    display: flex;
    align-items: center;
    gap: 12px;
    height: 25px;
    margin: 0 11px -3px 0;
    padding: 0 5px 5px 0;
    background: #fff;
    border: 1px solid #b5b5b8;
    border-top: 0;
    border-radius: 0 0 2px 2px;
}

.url-end .reader {
    margin-right: 1px;
}

.bar {
    width: 1px;
    height: 14px;
    background: #999;
}

.url-end .bar {
    height: 21px;
    background: #ddd;
}

.web-search {
    display: flex;
    align-items: center;
    gap: 8px;
    width: 177px;
    height: 25px;
    margin: 0 5px -3px 0;
    padding: 0 0 3px 8px;
    background: #fff;
    border: 1px solid #b5b5b8;
    border-top: 0;
    color: #8b8b8d;
}

.web-search input {
    width: 120px;
    border: 0;
    padding: 0;
    font-family: "Open Sans", sans-serif;
    font-size: 13px;
    background: none;
}

input::placeholder {
    color: #757575;
    opacity: 1;
}

.tool {
    display: flex;
    justify-content: center;
    width: 32px;
}

.dark { color: #4a4a4f; }

.zoom-btn {
    width: 30px;
}

.zoom-level {
    width: 42px;
    text-align: center;
    border-left: 1px solid #bbb;
    border-right: 1px solid #bbb;
    color: #0c0c0d;
}

.menu-btn {
    width: 40px;
    margin-left: 2px;
    border-left: 1px solid #ccc;
}

.bookmarks {
    display: flex;
    justify-content: flex-end;
    align-items: center;
    gap: 12px;
    height: 25px;
    padding-right: 108px;
    border-bottom: 1px solid #dcdcdd;
}

.bookmarks svg {
    width: 16px;
    height: 16px;
}

.viewport {
    display: flex;
    flex: 1;
    min-height: 0;
}

.page {
    flex: 1;
    padding: 12px 2px 0 0;
    overflow: hidden;
    background: #f5f6fa;
}

.page-wrap {
    height: 100%;
    padding: 15px 14px 0 16px;
    background: #fff;
    border: 1px solid #e2e6ec;
    border-left: 0;
    border-radius: 8px 8px 0 0;
}

.site-header {
    display: flex;
    justify-content: flex-end;
    align-items: center;
    height: 38px;
    padding-right: 10px;
    background: #999;
}

.site-search {
    display: flex;
    height: 24px;
    border-radius: 4px;
    background: #fff;
    overflow: hidden;
    box-shadow: 0 0 10px #0075b0;
}

.site-search input {
    width: 150px;
    border: 0;
    padding: 0 3px;
    font-family: "DejaVu Sans", sans-serif;
    font-size: 12px;
}

.site-search button {
    display: flex;
    align-items: center;
    justify-content: center;
    width: 29px;
    border-left: 1px solid #c7c3bf;
    background: linear-gradient(#fff, #e9e9e9);
}

.site-search button svg {
    width: 14px;
    height: 14px;
}

.site-nav {
    height: 66px;
    margin-top: 70px;
    background: #dedede;
}

.post {
    height: 700px;
    padding-left: 281px;
    background: #f5f5f5;
    font-family: "Open Sans", sans-serif;
    font-size: 13px;
    line-height: 18px;
    color: #333;
    white-space: nowrap;
}

.post p {
    margin: 18px 0 0;
}

.post .tail {
    width: 325px;
    text-align: right;
}

.post .first {
    margin: 0;
    padding-top: 160px;
}

.post .gap { margin-top: 37px; }
.post .wide-gap { margin-top: 54px; }
.post .after-file { margin-top: 4px; }
.post .note { line-height: 19px; }

.attachment {
    font-family: "DejaVu Sans", sans-serif;
    font-size: 13px;
    line-height: 19px;
    color: #707070;
}

.attachment a {
    font-weight: bold;
    color: #5c8fc5;
    text-decoration: none;
    border-bottom: 1px solid #5c8fc5;
}

/* Scroll bars */
.vscroll {
    display: flex;
    flex-direction: column;
    align-items: center;
    width: 16px;
    padding-top: 4px;
    background: #f0f0f0;
    color: #505050;
}

.vscroll .thumb {
    width: 15px;
    height: 700px;
    margin-top: 3px;
    background: #cdcdcd;
}

.nav-scroll .thumb {
    height: 319px;
    margin-bottom: auto;
}

.nav-scroll {
    padding-bottom: 4px;
}

.hscroll {
    display: flex;
    align-items: center;
    gap: 4px;
    height: 16px;
    margin: auto 0 1px 0;
    padding: 0 4px;
    background: #f0f0f0;
    color: #505050;
}

.hscroll .thumb {
    width: 399px;
    height: 15px;
    margin-right: auto;
    background: #cdcdcd;
}

/* Explorer windows */
.explorer {
    position: absolute;
    display: flex;
    flex-direction: column;
    background: #fff;
    overflow: hidden;
}

.zip-window {
    top: 0;
    left: 0;
    width: 727px;
    height: 592px;
    border-right: 1px solid #aaa;
    border-bottom: 1px solid #999;
    box-shadow: 0 0 16px rgba(0, 0, 0, 0.45);
}

.folder-window {
    top: 162px;
    left: 734px;
    right: 2px;
    bottom: 1px;
    border: 1px solid #0063b1;
    border-top: 0;
    box-shadow: 0 0 18px rgba(0, 0, 0, 0.55);
}

.titlebar {
    display: flex;
    align-items: center;
    height: 30px;
    flex: none;
}

.folder-window .titlebar {
    height: 31px;
    background: #0063b1;
    color: #fff;
}

.quick {
    display: flex;
    align-items: center;
    width: 109px;
    padding-left: 8px;
}

.quick .bar { margin: 0 9px 0 6px; }
.quick .i16 + .i16 { margin-left: 7px; }
.quick .caret-bar { margin-left: 5px; color: #111; }
.quick .caret-bar + .bar { margin-left: 8px; }
.folder-window .quick .caret-bar { color: #001d3a; }
.folder-window .quick .bar { background: #6fa3d0; }

.context {
    align-self: flex-end;
    width: 159px;
    height: 27px;
    margin: 0 13px 0 119px;
    line-height: 28px;
    text-align: center;
    color: #444;
    background: #ffc4de;
}

.zip-window .title {
    color: #999;
}

.controls {
    display: flex;
    margin-left: auto;
    color: #777;
}

.folder-window .controls {
    color: #fff;
}

.controls button {
    display: flex;
    justify-content: center;
    width: 46px;
}

.controls svg {
    width: 11px;
    height: 11px;
}

.tabs {
    display: flex;
    align-items: center;
    height: 24px;
    flex: none;
    padding-right: 5px;
    border-bottom: 1px solid #dadbdc;
}

.zip-window .tabs {
    border-color: #fb8fc0;
}

.tab {
    height: 24px;
    line-height: 24px;
    color: #333;
}

.file-tab {
    width: 55px;
    height: 23px;
    margin-bottom: 1px;
    color: #fff;
    background: #0063b1;
}

.folder-window .file-tab { width: 56px; }
.home-tab { width: 58px; }
.share-tab { width: 60px; }
.view-tab { width: 52px; }

.view-tab.active {
    margin-bottom: -1px;
    background: #f5f6f7;
    border: 1px solid #dadbdc;
    border-bottom: 0;
}

.context-tab {
    width: 158px;
    margin: 0 0 -1px 3px;
    background: #f5f6f7;
    border: 1px solid #fb8fc0;
    border-bottom: 0;
}

.collapse {
    margin-left: auto;
    color: #999;
}

.help {
    width: 14px;
    height: 14px;
    margin-left: 9px;
}

.ribbon {
    display: flex;
    height: 92px;
    flex: none;
    padding: 3px 0;
    background: #f5f6f7;
    border-bottom: 1px solid #dadbdc;
}

.group {
    display: flex;
    flex-direction: column;
    border-right: 1px solid #e2e3e4;
}

.group-body {
    display: flex;
    height: 70px;
    margin-bottom: 2px;
}

.group-label {
    line-height: 14px;
    text-align: center;
    color: #5a5a5a;
}

.gallery {
    display: flex;
    height: 60px;
    margin: 4px 9px 0 6px;
    background: #fcfdfd;
    border: 1px solid #dadbdc;
}

.layout-gallery { margin-left: 5px; }

.gallery-items {
    display: grid;
    grid-template-columns: 140px 140px 139px;
    grid-auto-rows: 20px;
    margin: -1px 0;
    color: #333;
}

.layout-gallery .gallery-items {
    grid-template-columns: 110px 110px;
}

.gallery-items button {
    display: flex;
    align-items: center;
    gap: 5px;
    padding-left: 2px;
    line-height: 18px;
    white-space: nowrap;
}

.gallery-items .chosen {
    background: #cce4fd;
    border: 1px solid #559ee0;
    padding-left: 1px;
}

.gallery-scroll {
    display: flex;
    flex-direction: column;
    align-items: center;
    justify-content: space-around;
    width: 14px;
    margin-left: 2px;
    border-left: 1px solid #dadbdc;
    background: #f5f6f7;
    color: #45546a;
}

.faded { color: #aab0b8; }

.big {
    display: flex;
    flex-direction: column;
    align-items: center;
    line-height: 13px;
    white-space: nowrap;
}

.extract-group { width: 53px; align-items: center; }
.extract-icon { width: 28px; height: 32px; margin: 5px 0 3px 2px; }
.wide-icon { width: 28px; height: 21px; margin: 9px 0 10px; }
.sort-icon { width: 28px; height: 28px; margin: 5px 0 7px; }
.hide-icon { width: 22px; height: 28px; margin: 5px 0 7px; }

.with-caret {
    display: flex;
    align-items: center;
    gap: 3px;
}

.panes { width: 168px; }
.layout { width: 252px; }
.current { width: 83px; }
.showhide { width: 221px; }
.options { width: 58px; }

.nav-button { width: 70px; }

.pane-buttons {
    display: flex;
    flex-direction: column;
    gap: 11px;
    padding-top: 11px;
}

.pane-buttons button {
    display: flex;
    align-items: center;
    gap: 3px;
    line-height: 18px;
    white-space: nowrap;
}

.pane-icon { width: 16px; height: 12px; }

.sort-button { width: 49px; }

.column-buttons {
    display: flex;
    flex-direction: column;
    gap: 6px;
    padding-top: 4px;
}

.column-buttons button {
    display: flex;
    align-items: center;
    gap: 3px;
}

.checks {
    display: flex;
    flex-direction: column;
    gap: 4px;
    width: 134px;
    padding: 3px 0 0 7px;
}

.checks label {
    display: flex;
    align-items: center;
    gap: 7px;
    line-height: 18px;
    white-space: nowrap;
}

input[type="checkbox"] {
    appearance: none;
    flex: none;
    width: 13px;
    height: 13px;
    margin: 0;
    border: 1px solid #333;
    background: #fff;
}

.checks input[type="checkbox"] {
    border-color: #4a5f80;
}

/* Tick drawn with two borders */
input[type="checkbox"]:checked::before {
    content: "";
    display: block;
    width: 8px;
    height: 4px;
    margin: 2px 0 0 1px;
    border-left: 1px solid #222;
    border-bottom: 1px solid #222;
    transform: rotate(-45deg);
}

.checks input[type="checkbox"]:checked::before {
    border-width: 0 0 2px 2px;
    height: 5px;
}

.hide-button {
    width: 84px;
    color: #838383;
}

.options-button {
    width: 54px;
}

.options-button .caret {
    margin-top: 5px;
}

/* Address row */
.address-row {
    display: flex;
    align-items: center;
    height: 34px;
    flex: none;
    padding-right: 12px;
}

.folder-window .address-row {
    padding-left: 1px;
}

.arrows {
    display: flex;
    align-items: center;
    width: 105px;
    padding-left: 12px;
    color: #666;
}

.arrows .i14 + .i14 { margin-left: 15px; }
.small-chev { width: 8px; height: 8px; margin: 0 10px 0 12px; }
.off { color: #d4d4d4; }

.address {
    display: flex;
    flex: 1;
    align-items: center;
    height: 23px;
    padding-left: 3px;
    border: 1px solid #d9d9d9;
    color: #000;
}

.address .sep {
    margin: 0 7px 0 5px;
    color: #666;
}

.address .laquo { margin: 0 8px 2px 5px; color: #555; }

.address .drop {
    margin-left: auto;
    color: #666;
}

.refresh {
    display: flex;
    align-items: center;
    justify-content: center;
    width: 18px;
    height: 21px;
    margin-left: 2px;
    border-left: 1px solid #d9d9d9;
    color: #666;
}

.search {
    display: flex;
    align-items: center;
    width: 202px;
    height: 23px;
    margin-left: 12px;
    padding: 0 8px;
    border: 1px solid #d9d9d9;
    color: #555;
}

.search input {
    flex: 1;
    min-width: 0;
    border: 0;
    padding: 0;
}

.search svg {
    width: 12px;
    height: 12px;
}

/* Navigation pane */
.content {
    display: flex;
    flex: 1;
    min-height: 0;
}

.nav {
    width: 138px;
    flex: none;
    margin: 0;
    padding: 17px 0 0;
    list-style: none;
    overflow: hidden;
    color: #000;
}

.folder-window .nav {
    width: 156px;
}

.nav li {
    display: flex;
    align-items: center;
    gap: 5px;
    height: 24px;
    padding: 0 2px 0 31px;
    white-space: nowrap;
}

.nav .root { padding-left: 23px; }
.folder-window .nav li { padding-left: 32px; }
.folder-window .nav .root { padding-left: 24px; }
.nav .spaced { margin-top: 8px; }
.nav .selected { background: #d9d9d9; }

.pin {
    width: 12px;
    height: 12px;
    margin-left: auto;
}

.folder-window .pin { margin-right: 1px; }

/* File list */
.files {
    display: flex;
    flex: 1;
    flex-direction: column;
    min-width: 0;
    margin-left: 3px;
    border-left: 1px solid #f0f0f0;
    overflow: hidden;
}

.folder-window .files {
    margin-left: 2px;
}

table {
    flex: none;
    width: 553px;
    margin-left: 15px;
    table-layout: fixed;
    border-collapse: collapse;
    white-space: nowrap;
}

.folder-table { width: 590px; }

th {
    padding: 0 0 5px;
    font-weight: normal;
    text-align: left;
    color: #4c607a;
}

th div {
    height: 27px;
    padding: 0 6px;
    line-height: 27px;
    border-right: 1px solid #e5e5e5;
}

.zip-table .c-name { width: 150px; }
.zip-table .c-type { width: 80px; }
.zip-table .c-size { width: 104px; }
.zip-table .c-date { width: 160px; }
.zip-table .c-pass { width: 59px; }
.zip-table .c-pass div { border: 0; padding-right: 0; }
.folder-table .c-name { width: 146px; }
.folder-table .c-date { width: 160px; }
.folder-table .c-type { width: 120px; }
.folder-table .c-size { width: 80px; }
.folder-table .c-tags { width: 84px; }
.folder-table .c-tags div { margin-right: -4px; }

.name-head {
    position: relative;
    display: flex;
    align-items: center;
    gap: 10px;
    margin-left: -3px;
}

th .name-head { padding-left: 0; }

.sorted {
    position: absolute;
    top: -2px;
    left: 71px;
    color: #777;
}

td {
    height: 21px;
    padding: 0 6px;
    line-height: 18px;
    color: #6d6d6d;
}

td:first-child {
    padding: 0;
}

.num {
    text-align: right;
    padding-right: 8px;
}

tr.selected { background: #d9d9d9; }

tr.focused {
    outline: 1px solid #99d1ff;
    outline-offset: -1px;
}

.file-name {
    display: flex;
    align-items: center;
    gap: 4px;
    padding-left: 19px;
    color: #000;
}

.zip-table .file-name {
    gap: 3px;
    padding-left: 4px;
}

.marked {
    position: relative;
}

.tick {
    position: absolute;
    top: -5px;
    left: 108px;
    width: 26px;
    height: 28px;
    filter: drop-shadow(2px 3px 2px rgba(0, 0, 0, 0.6));
}

/* Status bar */
.status {
    display: flex;
    align-items: center;
    height: 23px;
    flex: none;
    padding-left: 3px;
    color: #1e395b;
}

.status span {
    padding: 0 10px;
    border-right: 1px solid #eee;
    line-height: 14px;
}

.view-switch {
    display: flex;
    margin-left: auto;
    margin-right: 4px;
}

.view-switch button {
    display: flex;
    align-items: center;
    justify-content: center;
    width: 22px;
    height: 23px;
}

.view-switch .on {
    background: #cce8f6;
    border: 1px solid #2a9fd8;
}

.ibeam {
    position: absolute;
    top: 790px;
    left: 418px;
    width: 8px;
    height: 16px;
}
```
